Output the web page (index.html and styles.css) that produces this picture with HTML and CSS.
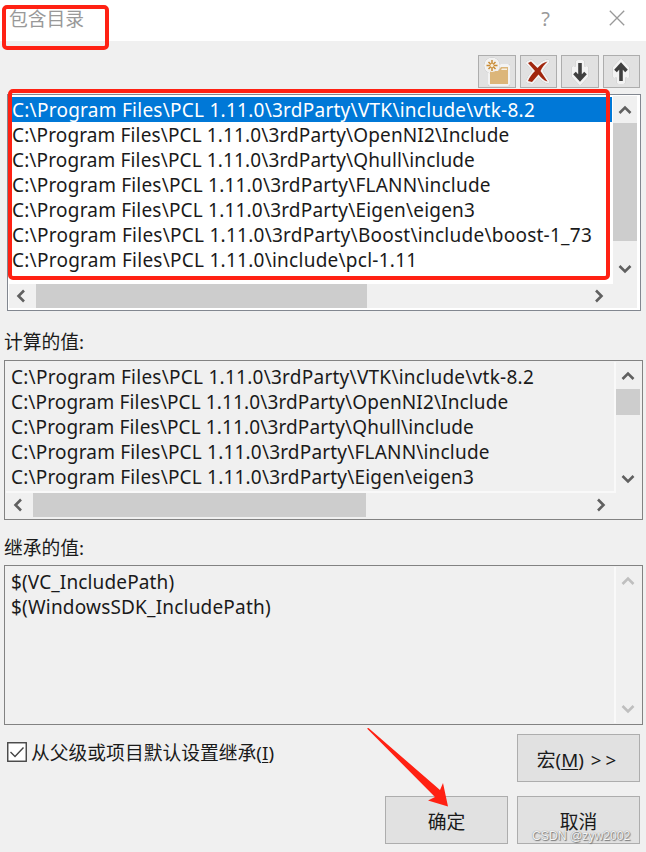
FILE: index.html
```html
<!DOCTYPE html>
<html lang="zh-CN">
<head>
    <meta charset="UTF-8">
    <meta name="viewport" content="width=device-width, initial-scale=1.0">
    <title>包含目录</title>
    <link rel="stylesheet" href="styles.css">
</head>
<body>
    <div class="dialog">
        <div class="title-bar">
            <span class="title">包含目录</span>
            <span class="help">?</span>
            <svg class="close" width="16" height="16" viewBox="0 0 16 16"><path d="M.8.8l14.400 14.400M15.200.8L.8 15.200"/></svg>
        </div>

        <div class="toolbar">
            <button class="tool">
                <svg width="30" height="30" viewBox="0 0 30 30">
                    <path class="halo" d="M8 13h8l3-4h7v18H8z"/>
                    <circle class="halo" cx="10" cy="8.500" r="6"/>
                    <path fill="#dcb67a" d="M8 14h8l3-4h7v17H8z"/>
                    <path fill="#f6efe2" d="M20 11.500h5v1.500h-6z"/>
                    <circle cx="10" cy="8.500" r="6.500" fill="#f2f0ec"/>
                    <path stroke="#c98b35" stroke-width="1.500" d="M10 3v11M4.500 8.500h11M6.500 5l7 7M13.500 5l-7 7"/>
                    <circle cx="10" cy="8.500" r="1.700" fill="#f8edd8"/>
                </svg>
            </button>
            <button class="tool">
                <svg width="30" height="30" viewBox="0 0 30 30">
                    <path class="halo" d="M5 6l3-1.500 6.500 6.500c3-3.500 6-5.500 10-6.500-3 3-5.500 6-7 9.500l7 10.500c-4-1-6.500-4-9-7L9 25l-4-1c1.500-4 4-7 7-10z"/>
                    <path fill="#a1260d" d="M5 6l3-1.500 6.500 6.500c3-3.500 6-5.500 10-6.500-3 3-5.500 6-7 9.500l7 10.500c-4-1-6.500-4-9-7L9 25l-4-1c1.500-4 4-7 7-10z"/>
                </svg>
            </button>
            <button class="tool">
                <svg width="30" height="30" viewBox="0 0 30 30">
                    <path class="halo" d="M12.500 5h5v8l4-2v8L15 26l-6.500-7v-8l4 2z"/>
                    <path class="arrow" d="M15 6v16M9.500 16l5.500 6 5.500-6"/>
                </svg>
            </button>
            <button class="tool">
                <svg width="30" height="30" viewBox="0 0 30 30">
                    <path class="halo" d="M12.500 25h5v-8l4 2v-8L15 4l-6.500 7v8l4-2z"/>
                    <path class="arrow" d="M15 24V8M9.500 14L15 8l5.500 6"/>
                </svg>
            </button>
        </div>

        <div class="list-box editable">
            <div class="items">
                <div class="item selected wide">C:\Program Files\PCL 1.11.0\3rdParty\VTK\include\vtk-8.2</div>
                <div class="item tight">C:\Program Files\PCL 1.11.0\3rdParty\OpenNI2\Include</div>
                <div class="item tight">C:\Program Files\PCL 1.11.0\3rdParty\Qhull\include</div>
                <div class="item">C:\Program Files\PCL 1.11.0\3rdParty\FLANN\include</div>
                <div class="item">C:\Program Files\PCL 1.11.0\3rdParty\Eigen\eigen3</div>
                <div class="item wide">C:\Program Files\PCL 1.11.0\3rdParty\Boost\include\boost-1_73</div>
                <div class="item wide">C:\Program Files\PCL 1.11.0\include\pcl-1.11</div>
            </div>
            <div class="v-scroll">
                <svg class="chevron" width="14" height="10" viewBox="0 0 14 10"><path d="M1.500 8L7 2.500 12.500 8"/></svg>
                <div class="thumb"></div>
                <svg class="chevron" width="14" height="10" viewBox="0 0 14 10"><path d="M1.500 2L7 7.500 12.500 2"/></svg>
            </div>
            <div class="h-scroll">
                <svg class="chevron" width="10" height="14" viewBox="0 0 10 14"><path d="M8 1.500L2.500 7 8 12.500"/></svg>
                <div class="thumb"></div>
                <svg class="chevron" width="10" height="14" viewBox="0 0 10 14"><path d="M2 1.500L7.500 7 2 12.500"/></svg>
            </div>
            <div class="corner"></div>
        </div>

        <div class="label">计算的值:</div>
        <div class="list-box computed">
            <div class="items">
                <div class="item wide">C:\Program Files\PCL 1.11.0\3rdParty\VTK\include\vtk-8.2</div>
                <div class="item tight">C:\Program Files\PCL 1.11.0\3rdParty\OpenNI2\Include</div>
                <div class="item tight">C:\Program Files\PCL 1.11.0\3rdParty\Qhull\include</div>
                <div class="item">C:\Program Files\PCL 1.11.0\3rdParty\FLANN\include</div>
                <div class="item">C:\Program Files\PCL 1.11.0\3rdParty\Eigen\eigen3</div>
            </div>
            <div class="v-scroll">
                <svg class="chevron" width="14" height="10" viewBox="0 0 14 10"><path d="M1.500 8L7 2.500 12.500 8"/></svg>
                <div class="thumb"></div>
                <svg class="chevron" width="14" height="10" viewBox="0 0 14 10"><path d="M1.500 2L7 7.500 12.500 2"/></svg>
            </div>
            <div class="h-scroll">
                <svg class="chevron" width="10" height="14" viewBox="0 0 10 14"><path d="M8 1.500L2.500 7 8 12.500"/></svg>
                <div class="thumb"></div>
                <svg class="chevron" width="10" height="14" viewBox="0 0 10 14"><path d="M2 1.500L7.500 7 2 12.500"/></svg>
            </div>
            <div class="corner"></div>
        </div>

        <div class="label">继承的值:</div>
        <div class="list-box inherited">
            <div class="items">
                <div class="item tight">$(VC_IncludePath)</div>
                <div class="item">$(WindowsSDK_IncludePath)</div>
            </div>
            <div class="v-scroll disabled">
                <svg class="chevron" width="14" height="10" viewBox="0 0 14 10"><path d="M1.500 8L7 2.500 12.500 8"/></svg>
                <svg class="chevron" width="14" height="10" viewBox="0 0 14 10"><path d="M1.500 2L7 7.500 12.500 2"/></svg>
            </div>
        </div>

        <div class="footer">
            <div class="check">
                <svg width="20" height="20" viewBox="0 0 20 20"><rect x=".75" y=".75" width="18.500" height="18.500"/><path d="M3.500 10l4.500 4.500 8.500-9"/></svg>
                <span>从父级或项目默认设置继承(<u>I</u>)</span>
            </div>
            <button class="btn macro">宏(<u>M</u>) <span class="more">&gt;&gt;</span></button>
            <button class="btn ok">确定</button>
            <button class="btn cancel">取消</button>
        </div>

        <!-- annotations over the dialog -->
        <div class="mark mark-title"></div>
        <div class="mark mark-list"></div>
        <svg class="pointer" width="84" height="80" viewBox="0 0 84 80"><path d="M0 .500L1.500 0l71.500 62 3-7L81 78.500 61 72.500l7-3.500z"/></svg>
        <div class="watermark">CSDN @zyw2002</div>
    </div>
</body>
</html>
```

FILE: styles.css
```css
* {
    box-sizing: border-box;
}
body {
    margin: 0;
    font-family: "Noto Sans", "Noto Sans CJK SC", sans-serif;
    font-size: 18.8px;
    color: #1a1a1a;
    background-color: #f0f0f0;
}
.dialog {
    position: relative;
    width: 646px;
    height: 852px;
    overflow: hidden;
    background-color: #f0f0f0;
}
.title-bar {
    display: flex;
    align-items: center;
    height: 41px;
    padding: 0 21px 5px 9px;
    background-color: white;
    color: #999;
}
.title {
    flex: 1;
}
.help {
    margin-right: 59px;
    font-size: 20px;
}
.close {
    fill: none;
    stroke: #999;
    stroke-width: 1.3;
}
.toolbar {
    display: flex;
    justify-content: flex-end;
    gap: 4px;
    height: 53px;
    padding: 14px 6px 6px 0;
}
.tool {
    display: flex;
    align-items: center;
    justify-content: center;
    width: 37.5px;
    padding: 0;
    border: 1px solid #adadad;
    background-color: #e1e1e1;
}
.halo {
    fill: #f3f3f3;
    stroke: #f3f3f3;
    stroke-width: 4;
    stroke-linejoin: round;
    filter: drop-shadow(0 0 .7px #999);
}
.arrow {
    fill: none;
    stroke: #3f3f3f;
    stroke-width: 3.6;
}
.list-box {
    display: grid;
    grid-template-columns: 1fr 24px;
    border: 1.5px solid #828282;
    margin: 0 3px 0 4px;
}
.items {
    min-width: 0;
    overflow: hidden;
    white-space: nowrap;
}
.item {
    height: 25px;
    line-height: 26px;
    font-size: 19px;
    letter-spacing: 0.19px;
}
.tight {
    letter-spacing: 0.13px;
}
.wide {
    letter-spacing: 0.255px;
}
.selected {
    background-color: #0078d7;
    color: white;
}
.v-scroll {
    display: flex;
    flex-direction: column;
    align-items: center;
}
.v-scroll .thumb {
    width: 24px;
}
.v-scroll .chevron:last-child {
    margin-top: auto;
}
.h-scroll {
    display: flex;
    align-items: center;
}
.h-scroll .thumb {
    height: 24px;
}
.h-scroll .chevron:last-child {
    margin-left: auto;
}
.thumb {
    background-color: #cdcdcd;
}
.chevron {
    flex: none;
    fill: none;
    stroke: #606060;
    stroke-width: 2.6;
}
.disabled .chevron {
    stroke: #bfbfbf;
}
.editable {
    grid-template-rows: 188px 24px;
    height: 217px;
    margin: 0 5px 0 7px;
    padding: 1px 3px 1px 1px;
    border-color: #828790;
    background-color: white;
}
.editable .items {
    padding: 1px 1px 0 0;
}
.editable .item {
    padding-left: 3px;
}
.editable .v-scroll,
.editable .h-scroll,
.editable .corner {
    background-color: #f0f0f0;
}
.editable .v-scroll {
    padding: 9px 0 10px;
}
.editable .v-scroll .thumb {
    height: 118px;
    margin-top: 8px;
}
.editable .h-scroll {
    padding: 0 9px 0 7px;
}
.editable .h-scroll .thumb {
    width: 331px;
    margin-left: 10px;
}
.label {
    height: 49px;
    padding: 17px 0 0 4px;
    line-height: 28px;
}
.computed {
    grid-template-rows: 131px 24px;
    height: 160px;
    padding: 1px 2px 1px 1px;
}
.computed .items,
.inherited .items {
    border-right: 2px solid #f9f9f9;
    padding: 2px 0 0 5px;
}
.computed .items {
    border-bottom: 2px solid #f9f9f9;
}
.computed .v-scroll {
    padding: 9px 0;
}
.computed .v-scroll .thumb {
    height: 26px;
    margin-top: 8px;
}
.computed .h-scroll {
    padding: 0 10px 0 7px;
}
.computed .h-scroll .thumb {
    width: 333px;
    margin-left: 10px;
}
.computed + .label {
    height: 45px;
    padding-top: 14px;
}
.inherited {
    height: 160px;
    padding: 1px 2px 1px 1px;
}
.inherited .v-scroll {
    padding: 9px 0;
}
.footer {
    display: grid;
    grid-template-columns: 1fr 123px 123px;
    grid-template-rows: 48px 48px;
    gap: 14px 9px;
    padding: 9px 6px 0 7px;
}
.check {
    grid-column: 1 / 3;
    display: flex;
    align-items: center;
    gap: 4px;
    height: 35px;
    white-space: nowrap;
}
.check svg {
    fill: white;
    stroke: #444;
    stroke-width: 1.4;
}
.btn {
    padding: 1px 0 0;
    border: 1.5px solid #adadad;
    background-color: #e1e1e1;
    color: #1a1a1a;
    font: inherit;
}
.more {
    margin-left: 2px;
    letter-spacing: 4px;
}
.ok {
    grid-column: 2;
}
u {
    text-decoration-thickness: 1px;
    text-underline-offset: 2px;
}
.mark {
    position: absolute;
    border: 4px solid #ff2113;
    border-radius: 5px;
}
.mark-title {
    left: 2px;
    top: 5px;
    width: 107px;
    height: 45px;
}
.mark-list {
    left: 8px;
    top: 89px;
    width: 602px;
    height: 191px;
}
.pointer {
    position: absolute;
    left: 367px;
    top: 728px;
    fill: #ff2113;
}
.watermark {
    position: absolute;
    left: 532px;
    top: 827px;
    font-family: "Liberation Sans", sans-serif;
    font-size: 12.2px;
    line-height: 18px;
    white-space: nowrap;
    color: #f4f4f4;
    text-shadow: 1px 1px 1px #777, 0 0 1px #777;
}
```
